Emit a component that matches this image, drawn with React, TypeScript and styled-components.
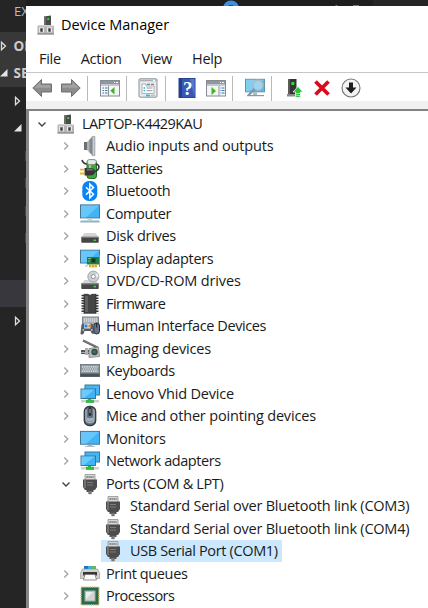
import React from "react";
import styled, { createGlobalStyle } from "styled-components";

const GlobalStyle = createGlobalStyle`
  * { box-sizing: border-box; }
  html, body { margin: 0; padding: 0; overflow: hidden; }
`;

const Desktop = styled.div`
  width: 428px;
  height: 608px;
  display: grid;
  grid-template-columns: 26px 402px;
  grid-template-rows: 6px 602px;
  background: #1f1f1f;
  font-family: "Open Sans", "Noto Sans", sans-serif;
  overflow: hidden;
`;

const Sidebar = styled.aside`
  grid-row: 1 / 3;
  background: #252526;
  overflow: hidden;
`;

const SideHeader = styled.div`
  height: 32px;
  padding: 1px 0 0 14px;
  font-size: 13px;
  line-height: 21px;
  color: #bbbbbb;
  white-space: nowrap;
  overflow: hidden;
`;

const SideRow = styled.div<{ $bg?: string; $indent?: number }>`
  height: 27.5px;
  padding-left: ${(p) => p.$indent ?? 0}px;
  display: flex;
  align-items: center;
  background: ${(p) => p.$bg ?? "transparent"};
  color: #cccccc;
  font-size: 13.5px;
  font-weight: 700;
  white-space: nowrap;
  overflow: hidden;
`;

const SideArrow = styled.svg`
  width: 8px;
  height: 12px;
  flex: none;
`;

const SideText = styled.span<{ $gap: number }>`
  margin-left: ${(p) => p.$gap}px;
`;

const SideMark = styled.i`
  width: 1px;
  height: 10px;
  margin-left: 25px;
  background: #464646;
`;

const TopStrip = styled.div`
  overflow: hidden;
  background: linear-gradient(90deg, #1e1e1e 0 347px, #252526 347px);
  svg { display: block; }
`;

const Window = styled.main`
  background: #ffffff;
  color: #1a1a1a;
  display: flex;
  flex-direction: column;
  min-height: 0;
`;

const TitleBar = styled.header`
  height: 38px;
  padding: 0 0 0 10px;
  display: flex;
  align-items: center;
  gap: 5px;
  color: #000;
`;

const Label = styled.span<{ $ls?: number }>`
  font-size: 14.5px;
  letter-spacing: ${(p) => p.$ls ?? -0.3}px;
  line-height: 20px;
  white-space: nowrap;
`;

const MenuBar = styled.nav`
  height: 28px;
  padding: 1px 0 0 13px;
  display: flex;
  align-items: center;
  gap: 20px;
`;

const Toolbar = styled.div`
  height: 29px;
  border-top: 1px solid #c4c8cc;
  display: flex;
  align-items: center;
  padding-left: 6px;
  padding-top: 2px;
`;

const Tool = styled.span<{ $gap: number }>`
  display: flex;
  width: 20px;
  height: 20px;
  margin-left: ${(p) => p.$gap}px;
`;

const Divider = styled.i<{ $gap: number }>`
  width: 1px;
  height: 25px;
  margin-left: ${(p) => p.$gap}px;
  background: #b9b9b9;
`;

const Frame = styled.div`
  flex: 1;
  min-height: 0;
  border-top: 8px solid #f0f0f0;
  display: flex;
`;

const Tree = styled.ul`
  flex: 1;
  margin: 0;
  padding: 1.6px 0 0;
  list-style: none;
  border-left: 3px solid #868686;
  border-top: 2px solid #828282;
  overflow: hidden;
`;

const TreeRow = styled.li<{ $level: number }>`
  height: 22.5px;
  padding-left: ${(p) => [1, 25, 48][p.$level]}px;
  display: flex;
  align-items: center;
`;

const Chevron = styled.svg`
  width: 24px;
  height: 22px;
  flex: none;
  fill: none;
`;

const Entry = styled.div<{ $level: number; $selected?: boolean }>`
  height: 22px;
  padding: 0 4px 0 2px;
  display: flex;
  align-items: center;
  gap: ${(p) => (p.$level === 2 ? 7 : 6)}px;
  background: ${(p) => (p.$selected ? "#cce8ff" : "transparent")};
`;

const Glyph = styled.svg`
  width: 20px;
  height: 20px;
  display: block;
  flex: none;
  overflow: visible;
`;

const Device = () => (
  <Glyph viewBox="0 0 20 20">
    <path d="M8 1.5 15 .5v10H8z" fill="#4b4b4b" />
    <path d="M8 1.5h2v9H8z" fill="#6d6d6d" />
    <rect x="11.2" y="3" width="2" height="2" fill="#29d43b" />
    <path d="M3.5 10h11l3.5 1v8.5H1.5V11z" fill="#b4b4b4" />
    <path d="M3.5 10h11l3.5 1.5h-16.5z" fill="#d2d2d2" />
    <path d="M1.5 18.3H18v1.2H1.5z" fill="#8d8d8d" />
    <path d="M3 12.2h5v5H3zM11 12.2h5v5h-5z" fill="#e9e9e9" />
    <path d="M4.3 13.2h2.4v3.6H4.3zM12.3 13.2h2.4v3.6h-2.4z" fill="#3c3c3c" />
  </Glyph>
);

const Speaker = () => (
  <Glyph viewBox="0 0 20 20">
    <path d="M4 6h3v8H4z" fill="#6b7074" />
    <path d="M7 6 12.5.8v18.4L7 14z" fill="#aeb3b7" />
    <path d="M9.5 3.6 12.5.8v18.4l-3-2.8z" fill="#84898d" />
    <path d="M12.3.4h2.6v19.2h-2.6z" fill="#c9ced1" stroke="#7e8386" strokeWidth=".6" />
  </Glyph>
);

const Battery = () => (
  <Glyph viewBox="0 0 20 20">
    <path d="M2 1c1 3 2 4 5 4" fill="none" stroke="#3a3a3a" strokeWidth="1.7" />
    <rect x="7" y="1" width="9.500" height="18.5" rx="2.5" fill="#3ca83e" stroke="#246e2b" />
    <rect x="7.2" y=".6" width="9.100" height="5" rx="2.2" fill="#e4ebe4" stroke="#778777" strokeWidth=".8" />
    <path d="M9 6h2v5H9z" fill="#8ade7c" />
    <path d="M15.500 5c4.500 0 5 6-1.500 8" fill="none" stroke="#3a3a3a" strokeWidth="1.7" />
    <path d="M4.5 9h5.500c3 0 5 1 5 3.500s-2 4-5 4H4.500z" fill="#363636" />
    <path d="M7 9.500h3c2 0 3 .7 3.500 2H7z" fill="#707070" />
    <path d="M0 10.700h4.500M0 14.500h4.500" stroke="#eeb12c" strokeWidth="1.8" />
  </Glyph>
);

const Bluetooth = () => (
  <Glyph viewBox="0 0 20 20">
    <rect x="2.300" y="0" width="15" height="20" rx="6.500" fill="#0a83f5" />
    <path d="m6 6.300 7.500 7L9.800 17V3l3.700 3.600-7.500 7" fill="none" stroke="#fff" strokeWidth="1.500" />
  </Glyph>
);

const Monitor = () => (
  <Glyph viewBox="0 0 20 20">
    <rect x=".5" y="2.400" width="19" height="12.800" fill="#42b4f6" stroke="#48758f" />
    <path d="M1 2.900h18L6 14.700H1z" fill="#67c6fb" />
    <path d="M7.500 15.700h5v1.800h-5z" fill="#9db8c7" />
    <path d="M5 17h10v1H5z" fill="#b5c2ca" />
  </Glyph>
);

const Computer = () => (
  <Glyph viewBox="0 0 20 20">
    <rect x=".5" y=".9" width="19" height="13" fill="#42b4f6" stroke="#48758f" />
    <path d="M1 1.400h18L6 13.400H1z" fill="#67c6fb" />
    <path d="M7.500 14.400h5v2h-5z" fill="#c3d0d8" />
    <path d="M1 16.300h18l1 2.200H0z" fill="#8cafc1" />
    <path d="M1 16.300h18v.8H1z" fill="#cfe0e9" />
  </Glyph>
);

const Disk = () => (
  <Glyph viewBox="0 0 20 20">
    <path d="M4.500 7h11l3 4h-17z" fill="#d4d4d4" />
    <rect x="1.300" y="10.700" width="17.400" height="6" rx=".7" fill="#454545" />
    <path d="M2 11h16v1H2z" fill="#777" />
    <rect x="13.500" y="13.500" width="2.500" height="1.500" fill="#3bd44a" />
  </Glyph>
);

const Display = () => (
  <Glyph viewBox="0 0 20 20">
    <rect x=".5" y="1.200" width="19" height="12.800" fill="#42b4f6" stroke="#48758f" />
    <path d="M1 1.700h18L6 13.500H1z" fill="#67c6fb" />
    <path d="M5 16.500h3v1H5z" fill="#a2bac6" />
    <path d="M19.500 6v12" stroke="#888f91" />
    <rect x="7" y="8" width="12" height="7.500" fill="#247c45" />
    <path d="M8 9.500h3M8 12h2" stroke="#76bb73" />
    <rect x="11.500" y="9.500" width="4" height="4" fill="#123b29" />
    <path d="M9 15.500h8v2.800H9z" fill="#e3a62a" />
    <path d="M11.500 15.500v2.800M14.500 15.500v2.800" stroke="#fff0b4" strokeWidth=".6" />
  </Glyph>
);

const Disc = () => (
  <Glyph viewBox="0 0 20 20">
    <path d="M4.500 9h11l3 4h-17z" fill="#d4d4d4" />
    <circle cx="13.300" cy="5.600" r="5.500" fill="#cbd0d2" stroke="#92989b" strokeWidth=".8" />
    <path d="m13.300 5.600 4-3.500 1.200 4z" fill="#edf2f2" />
    <circle cx="13.300" cy="5.600" r="2" fill="#fff" stroke="#8c9194" />
    <rect x="1.300" y="12" width="17.400" height="6" rx=".7" fill="#484848" />
    <path d="M2 12.300h16v1H2z" fill="#a1a1a1" />
    <rect x="13.500" y="14.800" width="2.500" height="1.500" fill="#3bd44a" />
  </Glyph>
);

const Chip = () => (
  <Glyph viewBox="0 0 20 20">
    <path d="M2.800 .8v18.500M17.200 .8v18.500" stroke="#383838" strokeWidth="2.600" strokeDasharray="1.500 1.100" />
    <path d="M4 .3h4q2 2 4 0h4v19H4z" fill="#454545" stroke="#262626" strokeWidth=".7" />
    <path d="M5 2h3v16H5z" fill="#606060" />
  </Glyph>
);

const Hid = () => (
  <Glyph viewBox="0 0 20 20">
    <rect x="2.500" y="1" width="16" height="8" fill="#a9b0b7" stroke="#7c858d" />
    <path d="M4 3h13M4 5h13" stroke="#eef1f3" strokeDasharray="1.200 .8" />
    <path d="M1.500 8.500q4-2 6-.5 2.500-1.500 5.500 .5l1 9q-2 2-3.500-2.500h-6Q3.500 20 .5 18z" fill="#555d66" />
    <path d="M4 7.500h6.500v5H4z" fill="#dfe6ea" />
    <path d="M4.500 8.500h3v3h-3z" fill="#2889dd" />
    <circle cx="9.800" cy="10" r="1.600" fill="#e3852c" />
    <path d="M2.500 14H4M11 14h1.500" stroke="#cfd4d8" strokeWidth="1.500" />
    <rect x="13.800" y="7" width="5.700" height="11" rx="2.800" fill="#657382" stroke="#28313b" />
    <path d="M16.700 7v4.500" stroke="#1c242d" />
  </Glyph>
);

const Camera = () => (
  <Glyph viewBox="0 0 20 20">
    <path d="m3 1.500 14.500 7" stroke="#555" strokeWidth="2" />
    <path d="m3 1.500 14 6.300" stroke="#a2a2a2" strokeWidth=".6" />
    <path d="M1 11h8v2H1zM1 13.500h8v1.500H1z" fill="#555" />
    <path d="M5 9h3v7H5z" fill="#aeb2b4" />
    <path d="M9 9.500 18.500 8l1 9.500-10.500 1z" fill="#bcbdb9" stroke="#777" strokeWidth=".7" />
    <circle cx="14.500" cy="13" r="3.200" fill="#3d494d" />
    <circle cx="14.300" cy="12.800" r="1.500" fill="#228577" />
  </Glyph>
);

const Keyboard = () => (
  <Glyph viewBox="0 0 20 20">
    <rect x=".4" y="3.500" width="19.200" height="12" fill="#8d979f" stroke="#65717a" strokeWidth=".8" />
    <path d="M2 5.800h16M3 8h14M2 10.200h16" stroke="#f0f3f4" strokeWidth="1.200" strokeDasharray="1.400 .8" />
    <path d="M.4 12.500h19.200v3.200H.4z" fill="#48525b" />
  </Glyph>
);

const Network = () => (
  <Glyph viewBox="0 0 20 20">
    <rect x="5" y="1" width="14.500" height="10" fill="#45b5f6" stroke="#397895" />
    <rect x="1" y="5" width="14.500" height="9.500" fill="#42b2f6" stroke="#397895" />
    <path d="M1.500 5.500h13L4 14H1.500z" fill="#6bcafd" />
    <path d="M8 15h3v2H8z" fill="#2fb148" />
    <path d="M1 16h18v2.500H1z" fill="#cfd1d1" />
    <path d="M6 15.700h8v3.200H6z" fill="#36b84b" />
  </Glyph>
);

const Mouse = () => (
  <Glyph viewBox="0 0 20 20">
    <rect x="4.300" y=".5" width="11.400" height="19" rx="5" fill="#69727b" stroke="#32383e" strokeWidth="1.300" />
    <path d="M6 3.500v9q0 4 4 4t4-4v-9" fill="none" stroke="#a9b8c5" strokeWidth="1.300" />
    <path d="M7 11.500q3 1.500 6 0v2.500q-3 3-6 0z" fill="#9fb4c6" />
    <rect x="8.500" y="1" width="3" height="9" rx="1.500" fill="#293039" />
    <path d="M10 3v4" stroke="#a6b0b8" />
  </Glyph>
);

const Plug = () => (
  <Glyph viewBox="0 0 20 20">
    <path d="M5 .5h10v6H5z" fill="#d8d8d8" stroke="#919191" strokeWidth=".8" />
    <path d="M6.500 3h7" stroke="#555" strokeDasharray="1.200 .8" strokeWidth="1.500" />
    <path d="M3 5.500h14v7.500l-2 3H5l-2-3z" fill="#4d4d4d" />
    <path d="M4 6h2v8H4z" fill="#727272" />
    <path d="M7 8.500h6M7 11h6" stroke="#7d7d7d" />
    <path d="M6.500 15.500h7V18h-7z" fill="#505050" />
    <path d="M8.300 17h3.400v3.200H8.300z" fill="#777" />
  </Glyph>
);

const Printer = () => (
  <Glyph viewBox="0 0 20 20">
    <path d="M4 2h12v4H4z" fill="#2872b5" />
    <path d="M8 2h5v4H8z" fill="#31b5e6" />
    <path d="M12 2h4v4h-4z" fill="#63bd54" />
    <path d="M2.500 5h15l2 4v5.500H.5V9z" fill="#d1d1d1" stroke="#8d8d8d" strokeWidth=".6" />
    <path d="M3 8h14v3.500H3z" fill="#383838" />
    <path d="m5 10.500-1.500 5.500h13L15 10.500z" fill="#fafafa" stroke="#777" strokeWidth=".8" />
  </Glyph>
);

const Processor = () => (
  <Glyph viewBox="0 0 20 20">
    <rect x="1.200" y="1.200" width="17.600" height="17.600" fill="#21644b" stroke="#bca85c" strokeWidth="1.500" strokeDasharray="1.200 1" />
    <rect x="2" y="2" width="16" height="16" fill="#286a50" />
    <rect x="5" y="5" width="10" height="10" fill="#d1d6d3" stroke="#a0afa5" />
    <path d="M6 6h7l-7 7z" fill="#eceeec" />
  </Glyph>
);

const ArrowLeft = () => (
  <Glyph viewBox="0 0 20 20">
    <path d="M.8 10 9.500 1.500V6h10v8h-10v4.500z" fill="#8c8c8c" stroke="#6d6d6d" strokeLinejoin="round" />
    <path d="M2.500 9.700 8.500 3.800v3.300h10v2.600z" fill="#a2a2a2" />
  </Glyph>
);

const ArrowRight = () => (
  <Glyph viewBox="0 0 20 20">
    <path d="M19.200 10 10.500 1.500V6h-10v8h10v4.500z" fill="#8c8c8c" stroke="#6d6d6d" strokeLinejoin="round" />
    <path d="m17.500 9.700-6-5.900v3.300h-10v2.600z" fill="#a2a2a2" />
  </Glyph>
);

const ConsoleTree = () => (
  <Glyph viewBox="0 0 20 20">
    <rect x=".5" y="2.500" width="19" height="15.500" fill="#f4f5f6" stroke="#858b91" />
    <path d="M1 3h18v3.500H1z" fill="#8f98a1" />
    <path d="M14 4.500h1M16 4.500h2" stroke="#fff" />
    <path d="M1 7.300h18" stroke="#b9bfc5" />
    <path d="M8.500 8v10" stroke="#8d959c" />
    <path d="M2.500 10h1.500M5 10h2.500M2.500 12.500h1.500M5 12.500h2.500M2.500 15h1.500M5 15h2.500" stroke="#3b78b5" strokeWidth="1.200" />
    <path d="M14.500 9v7.500L10.300 12.700z" fill="#43b51c" />
  </Glyph>
);

const Properties = () => (
  <Glyph viewBox="0 0 20 20">
    <rect x="1" y=".8" width="18" height="18.400" rx="1" fill="#e7e9eb" stroke="#8c9299" />
    <path d="M2 2.500h16" stroke="#a9afb5" strokeWidth="1.500" />
    <path d="M15 2.500h2" stroke="#fff" />
    <path d="M4 6h4v2h8v7.500H4z" fill="#fff" stroke="#aab2b9" />
    <path d="M9 6.300h3M13 6.300h3" stroke="#7f8a94" strokeWidth="1.300" />
    <path d="M5.500 10h1.500M5.500 12.700h1.500" stroke="#2ba5ce" strokeWidth="1.300" />
    <path d="M8.500 10h6M8.500 12.700h6" stroke="#8f999f" />
    <path d="M8 17.500h4" stroke="#2db9e5" strokeWidth="1.800" />
    <path d="M13 17.500h4" stroke="#b6c2c9" strokeWidth="1.500" />
  </Glyph>
);

const HelpText = styled.text`
  font: 700 19px "Liberation Serif", serif;
  fill: #fff;
`;

const Help = () => (
  <Glyph viewBox="0 0 20 20">
    <rect x="2" y=".5" width="16" height="19" fill="#3858b6" stroke="#29458e" />
    <path d="M2 .5h3v19H2z" fill="#233d91" />
    <path d="M13 1h4.500v18z" fill="#5478cd" />
    <HelpText x="6" y="16.500">?</HelpText>
  </Glyph>
);

const ActionPane = () => (
  <Glyph viewBox="0 0 20 20">
    <rect x=".5" y="2.500" width="19" height="15.500" fill="#f4f5f6" stroke="#858b91" />
    <path d="M1 3h18v3.500H1z" fill="#8f98a1" />
    <path d="M14 4.500h1M16 4.500h2" stroke="#fff" />
    <path d="M1 7.300h18" stroke="#b9bfc5" />
    <path d="M13 8v10" stroke="#8d959c" />
    <path d="M14.500 10h1M16 10h2.500M14.500 12.500h1M16 12.500h2.500M14.500 15h1M16 15h2.500" stroke="#3b78b5" strokeWidth="1.200" />
    <path d="M5.500 9v8L10 13z" fill="#43b51c" />
  </Glyph>
);

const Scan = () => (
  <Glyph viewBox="0 0 20 20">
    <rect x=".5" y="1.300" width="19" height="12.500" fill="#54b9eb" stroke="#5f94ac" />
    <path d="M1 1.800h18L5 13.300H1z" fill="#83cdef" />
    <path d="M8 14.300h4v3H8z" fill="#a8bac4" />
    <path d="M2 17h17v1.200H2z" fill="#7d9cac" />
    <circle cx="13" cy="7.200" r="5" fill="#9bd6f1" stroke="#aeb9c1" strokeWidth="1.400" />
    <path d="m9.500 11-6.200 6.500" stroke="#7b97a8" strokeWidth="2.200" />
  </Glyph>
);

const UpdateDriver = () => (
  <Glyph viewBox="0 0 20 20">
    <path d="M4 1h8.500v16.500H4z" fill="#343434" />
    <path d="M4 1h2v16.500H4z" fill="#5b5b5b" />
    <path d="M3 16h9v2.500H3z" fill="#8b8b8b" />
    <rect x="7.300" y="4" width="3" height="3" fill="#27df34" />
    <path d="m14 8.500 5 5.500h-2.500v5.500h-5V14H9z" fill="#2cc23e" stroke="#fff" strokeWidth=".7" />
    <path d="M11.500 15.500h5M11.500 17.700h5" stroke="#d3f4d3" strokeWidth=".8" />
  </Glyph>
);

const Remove = () => (
  <Glyph viewBox="0 0 20 20">
    <path d="M3.500 3.500 16.500 16.500M16.500 3.500 3.500 16.500" stroke="#d90b1c" strokeWidth="3.800" />
  </Glyph>
);

const Disable = () => (
  <Glyph viewBox="0 0 20 20">
    <circle cx="10" cy="10" r="9" fill="#f3f3f3" stroke="#737373" strokeWidth="1.100" />
    <path d="M8 4.500h4v5h3.500L10 15.500 4.500 9.500H8z" fill="#1d1d1d" />
  </Glyph>
);

type Node = {
  label: string;
  icon: React.FC;
  level: number;
  state?: "open" | "closed";
  selected?: boolean;
  ls?: number;
};

const nodes: Node[] = [
  { label: "LAPTOP-K4429KAU", icon: Device, level: 0, state: "open", ls: -0.57 },
  { label: "Audio inputs and outputs", icon: Speaker, level: 1, state: "closed", ls: -0.17 },
  { label: "Batteries", icon: Battery, level: 1, state: "closed", ls: -0.45 },
  { label: "Bluetooth", icon: Bluetooth, level: 1, state: "closed", ls: -0.25 },
  { label: "Computer", icon: Computer, level: 1, state: "closed", ls: -0.4 },
  { label: "Disk drives", icon: Disk, level: 1, state: "closed" },
  { label: "Display adapters", icon: Display, level: 1, state: "closed", ls: -0.33 },
  { label: "DVD/CD-ROM drives", icon: Disc, level: 1, state: "closed", ls: -0.14 },
  { label: "Firmware", icon: Chip, level: 1, state: "closed", ls: -0.55 },
  { label: "Human Interface Devices", icon: Hid, level: 1, state: "closed", ls: -0.4 },
  { label: "Imaging devices", icon: Camera, level: 1, state: "closed", ls: -0.17 },
  { label: "Keyboards", icon: Keyboard, level: 1, state: "closed" },
  { label: "Lenovo Vhid Device", icon: Network, level: 1, state: "closed", ls: -0.2 },
  { label: "Mice and other pointing devices", icon: Mouse, level: 1, state: "closed", ls: -0.17 },
  { label: "Monitors", icon: Monitor, level: 1, state: "closed", ls: -0.15 },
  { label: "Network adapters", icon: Network, level: 1, state: "closed", ls: -0.42 },
  { label: "Ports (COM & LPT)", icon: Plug, level: 1, state: "open", ls: -0.37 },
  { label: "Standard Serial over Bluetooth link (COM3)", icon: Plug, level: 2, ls: -0.23 },
  { label: "Standard Serial over Bluetooth link (COM4)", icon: Plug, level: 2, ls: -0.23 },
  { label: "USB Serial Port (COM1)", icon: Plug, level: 2, selected: true, ls: -0.35 },
  { label: "Print queues", icon: Printer, level: 1, state: "closed", ls: -0.38 },
  { label: "Processors", icon: Processor, level: 1, state: "closed", ls: -0.55 },
];

const Closed = () => (
  <SideArrow viewBox="0 0 8 12">
    <path d="M1.500 2.300 5.500 6l-4 3.700z" fill="none" stroke="#dcdcdc" strokeWidth="1.300" />
  </SideArrow>
);

const Opened = () => (
  <SideArrow viewBox="0 0 8 12">
    <path d="M7.500 2v7.500H0z" fill="#e4e4e4" />
  </SideArrow>
);

export default function App() {
  return (
    <>
      <GlobalStyle />
      <Desktop>
        <Sidebar>
          <SideHeader>EX</SideHeader>
          <SideRow $bg="#383838" $indent={-1}>
            <Closed />
            <SideText $gap={5.5}>OP</SideText>
          </SideRow>
          <SideRow $bg="#383838">
            <Opened />
            <SideText $gap={5.5}>SE</SideText>
          </SideRow>
          <SideRow $indent={14}><Closed /></SideRow>
          <SideRow $indent={14}><Opened /></SideRow>
          <SideRow><SideMark /></SideRow>
          <SideRow><SideMark /></SideRow>
          <SideRow><SideMark /></SideRow>
          <SideRow><SideMark /></SideRow>
          <SideRow />
          <SideRow $bg="#37373d" />
          <SideRow $indent={14}><Closed /></SideRow>
        </Sidebar>
        <TopStrip>
          <svg width="402" height="6" viewBox="0 0 402 6">
            <circle cx="205" cy="8.500" r="8" fill="#3b8fdd" />
            <path d="M203 5h4v1h-4z" fill="#1d4d80" />
            <path d="M309.500 5h2v1h-2zM327 5h6v1h-6z" fill="#777" />
          </svg>
        </TopStrip>
        <Window>
          <TitleBar>
            <Device />
            <Label $ls={-0.02}>Device Manager</Label>
          </TitleBar>
          <MenuBar>
            <Label>File</Label>
            <Label>Action</Label>
            <Label>View</Label>
            <Label>Help</Label>
          </MenuBar>
          <Toolbar>
            <Tool $gap={0}><ArrowLeft /></Tool>
            <Tool $gap={9}><ArrowRight /></Tool>
            <Divider $gap={6} />
            <Tool $gap={12}><ConsoleTree /></Tool>
            <Divider $gap={6} />
            <Tool $gap={11}><Properties /></Tool>
            <Divider $gap={7} />
            <Tool $gap={11}><Help /></Tool>
            <Tool $gap={9}><ActionPane /></Tool>
            <Divider $gap={6} />
            <Tool $gap={12}><Scan /></Tool>
            <Divider $gap={6} />
            <Tool $gap={12}><UpdateDriver /></Tool>
            <Tool $gap={8}><Remove /></Tool>
            <Tool $gap={9}><Disable /></Tool>
          </Toolbar>
          <Frame>
            <Tree>
              {nodes.map(({ label, icon: Icon, level, state, selected, ls }) => (
                <TreeRow key={label} $level={level}>
                  <Chevron viewBox="0 0 24 22">
                    {state === "open" && <path d="m8.500 9.500 3.500 3.500 3.500-3.500" stroke="#444" strokeWidth="1.400" />}
                    {state === "closed" && <path d="m10.300 7.500 3.500 3.500-3.500 3.500" stroke="#a3a3a3" strokeWidth="1.300" />}
                  </Chevron>
                  <Entry $level={level} $selected={selected}>
                    <Icon />
                    <Label $ls={ls}>{label}</Label>
                  </Entry>
                </TreeRow>
              ))}
            </Tree>
          </Frame>
        </Window>
      </Desktop>
    </>
  );
}
